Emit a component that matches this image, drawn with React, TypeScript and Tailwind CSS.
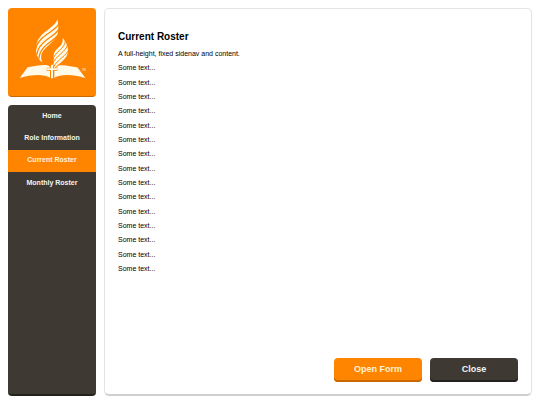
import { useState } from "react";

const pages = ["Home", "Role Information", "Current Roster", "Monthly Roster"];

const lines = ["A full-height, fixed sidenav and content.", ...Array(15).fill("Some text...")];

function Logo() {
  return (
    <svg viewBox="24 24 264 264" className="block w-full" role="img" aria-label="Logo">
      {/* left flame */}
      <path
        fill="#fffbe8"
        d="M172 58C170 68 160 77 148 86C127 101 109 116 108 143C107 163 115 178 127 187C119 167 125 155 140 141C158 124 175 112 174 93C176 84 175 70 172 58Z"
      />
      <g fill="none" stroke="#ff8500" strokeWidth="4">
        <path d="M176 72C166 96 112 107 107 149" />
        <path d="M177 86C168 110 115 122 111 163" />
        <path d="M177 101C165 124 118 135 117 176" />
      </g>
      {/* right flame */}
      <path
        fill="#fffbe8"
        d="M188 113C191 131 178 140 168 150C159 160 160 172 161 203H165C176 189 203 179 204 153C205 136 196 125 188 113Z"
      />
      <g fill="none" stroke="#ff8500" strokeWidth="3">
        <path d="M196 122C196 146 163 155 158 181" />
        <path d="M203 132C200 156 166 166 158 192" />
        <path d="M207 146C202 168 171 177 160 203" />
      </g>
      {/* open book with the cross between the pages */}
      <g fill="#fffbe8">
        <path d="M59 234L83 202C104 199 121 194 137 195C145 196 150 199 152 203H140V212H150V233C131 221 94 223 59 234Z" />
        <path d="M256 234L232 202C211 199 194 194 180 196C175 197 171 200 168 203H173V212H163V233C184 221 221 223 256 234Z" />
        <path d="M153 194H159V205H173V210H159V235H153V210H140V205H153Z" />
      </g>
      <text x="246" y="214" fontSize="8" fill="#fffbe8">
        TM
      </text>
    </svg>
  );
}

export default function App() {
  const [active, setActive] = useState("Current Roster");

  return (
    <div className="flex h-screen gap-2 bg-white p-2 pb-[9px] font-['Liberation_Sans',Arial,sans-serif] text-black">
      <aside className="flex w-[88px] shrink-0 flex-col gap-2">
        <div className="overflow-hidden rounded-sm border-b border-[#c96800] bg-[#ff8500]">
          <Logo />
        </div>

        <nav className="flex flex-1 flex-col rounded-sm border-b-2 border-[#22211d] bg-[#3e3a33]">
          <div className="flex h-[89px] flex-col">
            {pages.map((page) => (
              <a
                key={page}
                href="#"
                onClick={() => setActive(page)}
                className={
                  page === active
                    ? "flex flex-1 items-center justify-center bg-[#ff8500] text-[7px] font-bold text-[#fff3d6]"
                    : "flex flex-1 items-center justify-center text-[7px] font-bold text-[#f4f4f4]"
                }
              >
                {page}
              </a>
            ))}
          </div>
        </nav>
      </aside>

      <main className="flex flex-1 flex-col rounded-[5px] border border-b-2 border-[#e4e4e4] border-b-[#cfcfcf] px-[13px] pt-5 pb-3">
        <h1 className="text-[10px] leading-4 font-bold">Current Roster</h1>
        <div className="mt-0.5 flex h-[229px] flex-col justify-between text-[7px] leading-[14px]">
          {lines.map((line, i) => (
            <p key={i}>{line}</p>
          ))}
        </div>

        <div className="mt-auto flex justify-end gap-2">
          <button className="h-6 w-[88px] rounded-sm bg-[#ff8500] text-[9px] font-bold text-[#fff3d6] shadow-[inset_0_-2px_#c96800]">
            Open Form
          </button>
          <button className="h-6 w-[88px] rounded-sm bg-[#3e3a33] text-[9px] font-bold text-[#f4f4f4] shadow-[inset_0_-2px_#22211d]">
            Close
          </button>
        </div>
      </main>
    </div>
  );
}
